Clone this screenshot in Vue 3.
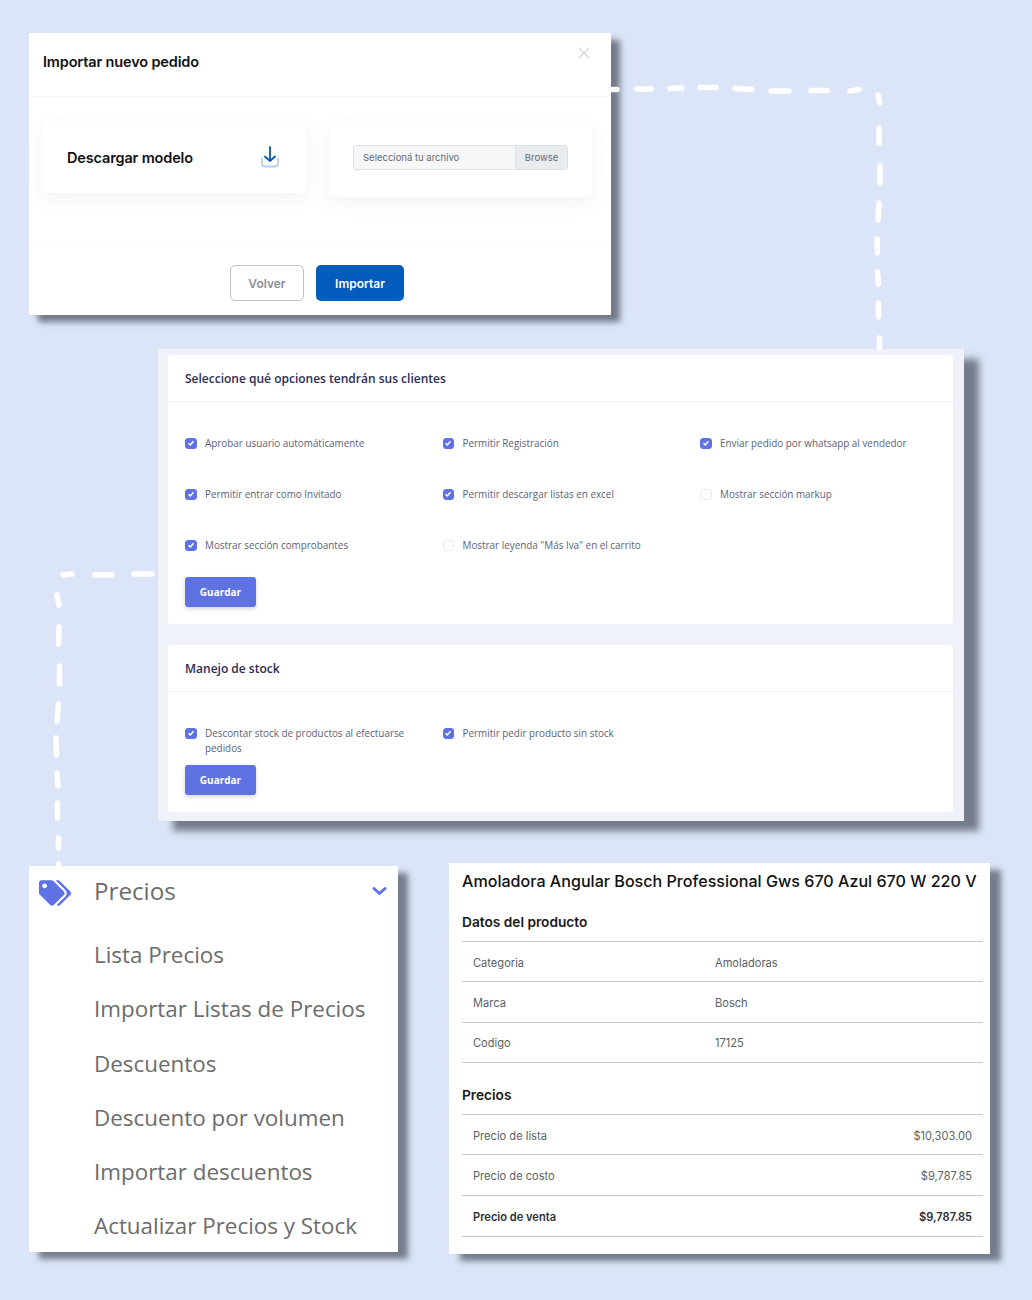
<script setup>
const dashesTop = [
  'M612 89.5h5', 'M637 89h14', 'M670 88.5l12 -.5', 'M700 87.5h16', 'M735 88.5l17 1', 'M771 91h18', 'M811 90.5h16', 'M850 91l9 -1.500',
  'M878 95l1.500 8', 'M879 128v15', 'M880 166v17', 'M879 203l-1 17', 'M877 239l.5 14', 'M877.500 272l1 12', 'M878.500 303v14', 'M879.500 338v9'
]
const dashesLeft = [
  'M63 575l9 -1', 'M95 575h17', 'M134 574h18',
  'M57 595l2 10', 'M59 627l-.5 17', 'M59.500 666v18', 'M58.500 704l-1.500 17', 'M56 738l.5 17', 'M57 773l1 13', 'M57.500 803v15', 'M58.500 838v10', 'M58.500 864v2'
]

const opciones = [
  { label: 'Aprobar usuario automáticamente', on: true },
  { label: 'Permitir Registración', on: true },
  { label: 'Enviar pedido por whatsapp al vendedor', on: true },
  { label: 'Permitir entrar como Invitado', on: true },
  { label: 'Permitir descargar listas en excel', on: true },
  { label: 'Mostrar sección markup', on: false },
  { label: 'Mostrar sección comprobantes', on: true },
  { label: 'Mostrar leyenda "Más Iva" en el carrito', on: false }
]
const stock = [
  { label: 'Descontar stock de productos al efectuarse pedidos', on: true },
  { label: 'Permitir pedir producto sin stock', on: true }
]
const menu = ['Lista Precios', 'Importar Listas de Precios', 'Descuentos', 'Descuento por volumen', 'Importar descuentos', 'Actualizar Precios y Stock']
const datos = [['Categoria', 'Amoladoras'], ['Marca', 'Bosch'], ['Codigo', '17125']]
const precios = [
  { k: 'Precio de lista', v: '$10,303.00' },
  { k: 'Precio de costo', v: '$9,787.85' },
  { k: 'Precio de venta', v: '$9,787.85', bold: true }
]
</script>

<template>
  <div class="canvas">
    <!-- lineas punteadas -->
    <svg class="dashes" width="1032" height="1300" viewBox="0 0 1032 1300" fill="none" stroke="#fff" stroke-width="5.500" stroke-linecap="round">
      <path v-for="d in dashesTop" :key="d" :d="d" />
      <path v-for="d in dashesLeft" :key="d" :d="d" />
    </svg>

    <!-- modal importar -->
    <section class="win win-modal">
      <header class="modal-head">
        <h2>Importar nuevo pedido</h2>
        <svg class="close" width="12" height="12" viewBox="0 0 12 12" stroke="#d4d6da" stroke-width="1.100" fill="none"><path d="M1 1l10 10M11 1L1 11" /></svg>
      </header>
      <div class="modal-body">
        <div class="mini-card down">
          <span>Descargar modelo</span>
          <svg width="20" height="22" viewBox="0 0 20 22" fill="none" stroke-linecap="round" stroke-linejoin="round">
            <path d="M2 12.500v5a3 3 0 0 0 3 3h10a3 3 0 0 0 3 -3v-5" stroke="#b5cff0" stroke-width="1.800" />
            <path d="M10 1v14M5 10.500l5 4.500 5 -4.500" stroke="#0f5fbd" stroke-width="1.900" />
          </svg>
        </div>
        <div class="mini-card file">
          <div class="file-input">
            <span class="file-name">Seleccioná tu archivo</span>
            <span class="file-btn">Browse</span>
          </div>
        </div>
      </div>
      <footer class="modal-foot">
        <button class="btn-volver">Volver</button>
        <button class="btn-importar">Importar</button>
      </footer>
    </section>

    <!-- opciones clientes -->
    <section class="win win-opts">
      <div class="opt-card first">
        <h3>Seleccione qué opciones tendrán sus clientes</h3>
        <div class="opt-body">
          <div class="opt-grid">
            <label v-for="o in opciones" :key="o.label" class="opt">
              <span class="check" :class="{ on: o.on }">
                <svg v-if="o.on" width="8" height="8" viewBox="0 0 8 8" fill="none" stroke="#fff" stroke-width="1.500"><path d="M1.500 4.200l1.800 1.700 3.200 -3.600" /></svg>
              </span>
              <span>{{ o.label }}</span>
            </label>
          </div>
          <button class="btn-guardar">Guardar</button>
        </div>
      </div>
      <div class="opt-card second">
        <h3>Manejo de stock</h3>
        <div class="opt-body">
          <div class="opt-grid tight">
            <label v-for="o in stock" :key="o.label" class="opt">
              <span class="check on">
                <svg width="8" height="8" viewBox="0 0 8 8" fill="none" stroke="#fff" stroke-width="1.500"><path d="M1.500 4.200l1.800 1.700 3.200 -3.600" /></svg>
              </span>
              <span>{{ o.label }}</span>
            </label>
          </div>
          <button class="btn-guardar">Guardar</button>
        </div>
      </div>
    </section>

    <!-- menu precios -->
    <section class="win win-menu">
      <div class="menu-head">
        <svg class="tags" width="32" height="26" viewBox="0 0 640 512" fill="#5e72e4"><path d="M497.941 225.941L286.059 14.059A48 48 0 0 0 252.118 0H48C21.49 0 0 21.49 0 48v204.118a48 48 0 0 0 14.059 33.941l211.882 211.882c18.744 18.745 49.136 18.746 67.882 0l204.118-204.118c18.745-18.745 18.745-49.137 0-67.882zM112 160c-26.51 0-48-21.49-48-48s21.49-48 48-48 48 21.49 48 48-21.49 48-48 48zm513.941 133.823L421.823 497.941c-18.745 18.745-49.137 18.745-67.882 0l-.36-.36L527.64 323.522c16.999-16.999 26.36-39.6 26.36-63.64s-9.362-46.641-26.36-63.64L331.397 0h48.721a48 48 0 0 1 33.941 14.059l211.882 211.882c18.745 18.745 18.745 49.137 0 67.882z" /></svg>
        <span class="menu-title">Precios</span>
        <svg class="chev" width="15" height="10" viewBox="0 0 15 10" fill="none" stroke="#5e72e4" stroke-width="3" stroke-linecap="round" stroke-linejoin="round"><path d="M2 2.500l5.500 5 5.500 -5" /></svg>
      </div>
      <ul class="menu-list">
        <li v-for="m in menu" :key="m">{{ m }}</li>
      </ul>
    </section>

    <!-- detalle producto -->
    <section class="win win-prod">
      <h1>Amoladora Angular Bosch Professional Gws 670 Azul 670 W 220 V</h1>
      <h4 class="sec-one">Datos del producto</h4>
      <div class="rows">
        <div v-for="r in datos" :key="r[0]" class="row">
          <span class="k">{{ r[0] }}</span><span>{{ r[1] }}</span>
        </div>
      </div>
      <h4 class="sec-two">Precios</h4>
      <div class="rows">
        <div v-for="p in precios" :key="p.k" class="row between" :class="{ bold: p.bold }">
          <span>{{ p.k }}</span><span>{{ p.v }}</span>
        </div>
      </div>
    </section>
  </div>
</template>

<style scoped>
.canvas {
  position: relative;
  width: 1032px;
  height: 1300px;
  background: #dbe5f7;
  overflow: hidden;
}

.dashes {
  position: absolute;
  left: 0;
  top: 0;
  z-index: 1;
}

.win {
  position: absolute;
  box-sizing: border-box;
  background: #fff;
}

/* modal */
.win-modal {
  left: 29px;
  top: 33px;
  width: 582px;
  height: 282px;
  box-shadow: 9px 7px 6px rgba(60, 65, 80, 0.66);
  font-family: Inter, "Liberation Sans", sans-serif;
  display: flex;
  flex-direction: column;
}

.modal-head {
  height: 64px;
  box-sizing: border-box;
  border-bottom: 1px solid #f6f7f9;
  padding: 0 21px 0 14px;
  display: flex;
  justify-content: space-between;
  align-items: flex-start;
}

.modal-head h2 {
  margin: 20px 0 0;
  font-size: 14.5px;
  line-height: 18px;
  font-weight: 600;
  letter-spacing: -0.15px;
  color: #111;
}

.close {
  margin-top: 14px;
}

.modal-body {
  height: 145px;
  box-sizing: border-box;
  border-bottom: 1px solid #f8f9fa;
  padding: 24px 19px 0 14px;
  display: flex;
  align-items: flex-start;
  justify-content: space-between;
}

.mini-card {
  box-sizing: border-box;
  background: #fff;
  border-radius: 6px;
  box-shadow: 0 6px 20px rgba(40, 50, 80, 0.06);
  display: flex;
}

.down {
  width: 263px;
  height: 72px;
  padding: 0 26px 0 24px;
  align-items: center;
  justify-content: space-between;
  font-size: 14.5px;
  font-weight: 600;
  letter-spacing: -0.15px;
  color: #111;
}

.file {
  width: 262px;
  height: 76px;
  padding: 24px 24px 0 23px;
  align-items: flex-start;
}

.file-input {
  flex: 1;
  height: 25px;
  box-sizing: border-box;
  display: flex;
  font-size: 9.5px;
  line-height: 23px;
  color: #666b70;
  border: 1px solid #dde0e4;
  border-radius: 3px;
  background: #f6f7f9;
}

.file-name {
  flex: 1;
  padding-left: 9px;
}

.file-btn {
  width: 51px;
  text-align: center;
  background: #e9ecef;
  border-left: 1px solid #dde0e4;
}

.modal-foot {
  flex: 1;
  padding-top: 23px;
  padding-left: 201px;
  display: flex;
  align-items: flex-start;
  gap: 12px;
}

.modal-foot button {
  height: 36px;
  box-sizing: border-box;
  border-radius: 5px;
  font-family: inherit;
  font-size: 12px;
  font-weight: 600;
}

.btn-volver {
  width: 74px;
  background: #fff;
  color: #8d9195;
  border: 1px solid #bfc2c5;
}

.btn-importar {
  width: 88px;
  background: #035bbb;
  color: #fff;
  border: 0;
}

/* opciones */
.win-opts {
  left: 158px;
  top: 349px;
  width: 806px;
  height: 472px;
  background: #f0f2f9;
  box-shadow: 15px 10px 7px rgba(60, 65, 80, 0.64);
  padding: 6px 11px 9px 10px;
  font-family: "Open Sans", "Noto Sans", sans-serif;
  display: flex;
  flex-direction: column;
  gap: 21px;
}

.opt-card {
  background: #fff;
  border-radius: 3px;
}

.first {
  height: 269px;
}

.second {
  height: 167px;
}

.opt-card h3 {
  margin: 0;
  height: 47px;
  box-sizing: border-box;
  border-bottom: 1px solid #f1f3f7;
  padding: 0 17px;
  font-size: 12px;
  line-height: 47px;
  font-weight: 600;
  color: #2a2c54;
}

.opt-body {
  padding: 34px 17px 0;
}

.opt-grid {
  display: grid;
  grid-template-columns: repeat(3, 257.5px);
  grid-auto-rows: 51px;
  height: 141px;
}

.opt-grid.tight {
  height: 39px;
  grid-auto-rows: 39px;
}

.opt {
  display: flex;
  align-items: flex-start;
  gap: 8.5px;
  font-size: 9.900px;
  line-height: 15px;
  color: #5c6178;
  padding-right: 32px;
}

.check {
  flex: none;
  width: 11.500px;
  height: 11.500px;
  margin-top: 1.500px;
  box-sizing: border-box;
  border: 1px solid #e8eaf0;
  border-radius: 3px;
  background: #fff;
  display: flex;
  align-items: center;
  justify-content: center;
}

.check.on {
  background: #5e72e4;
  border-color: #5e72e4;
}

.btn-guardar {
  display: block;
  width: 71px;
  height: 30px;
  border: 0;
  border-radius: 3px;
  background: #5e72e4;
  color: #fff;
  font-family: inherit;
  font-size: 10px;
  font-weight: 700;
  box-shadow: 0 2px 4px rgba(50, 50, 93, 0.2);
}

/* menu */
.win-menu {
  left: 29px;
  top: 866px;
  width: 369px;
  height: 386px;
  box-shadow: 10px 7px 6px rgba(60, 65, 80, 0.64);
  font-family: "Open Sans", "Noto Sans", sans-serif;
  color: #6c6c6c;
  font-size: 22.400px;
}

.menu-head {
  display: flex;
  align-items: center;
  height: 48px;
  padding: 0 11px 0 10px;
}

.tags {
  margin-right: 23px;
  margin-top: 6px;
}

.menu-title {
  flex: 1;
  font-size: 24.200px;
}

.chev {
  margin-top: 1px;
}

.menu-list {
  list-style: none;
  margin: 14px 0 0;
  padding: 0 0 0 65px;
}

.menu-list li {
  height: 54.300px;
  line-height: 54px;
  white-space: nowrap;
}

/* producto */
.win-prod {
  left: 449px;
  top: 863px;
  width: 541px;
  height: 391px;
  padding: 0 7px 0 13px;
  box-shadow: 11px 7px 6px rgba(60, 65, 80, 0.64);
  font-family: Inter, "Liberation Sans", sans-serif;
}

.win-prod h1 {
  margin: 8px 0 0;
  font-size: 16.100px;
  line-height: 20px;
  font-weight: 500;
  color: #111;
  white-space: nowrap;
}

.win-prod h4 {
  margin: 0;
  font-size: 13.700px;
  line-height: 18px;
  font-weight: 600;
  color: #1a1a1a;
}

.sec-one {
  padding: 22px 0 10px;
}

.sec-two {
  padding: 23px 0 10px;
}

.rows {
  border-top: 1px solid #c8c9cb;
}

.row {
  display: flex;
  height: 40.300px;
  box-sizing: border-box;
  align-items: center;
  padding: 2px 11px 0;
  border-bottom: 1px solid #c8c9cb;
  font-size: 11.100px;
  color: #5a5f66;
}

.row.between {
  height: 40.600px;
  justify-content: space-between;
}

.row .k {
  width: 242px;
}

.row.bold {
  font-weight: 600;
  color: #2b2e33;
}
</style>

<style>
html, body { background: #dbe5f7; }
</style>
